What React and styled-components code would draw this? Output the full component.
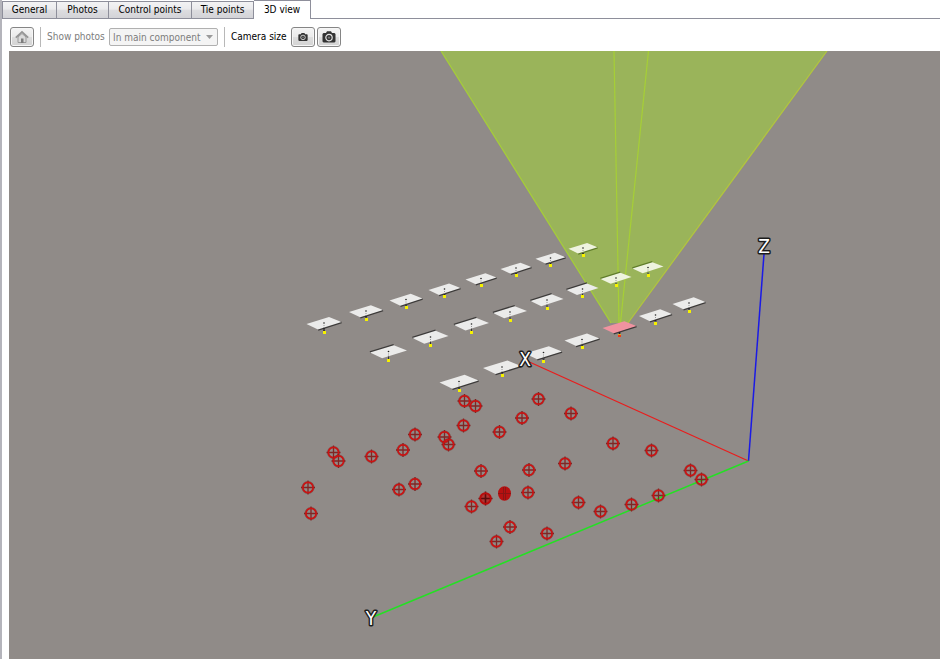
import { useState } from "react";
import styled, { createGlobalStyle, css } from "styled-components";

const GlobalStyle = createGlobalStyle`
  * {
    box-sizing: border-box;
  }

  body {
    margin: 0;
    background-color: #ffffff;
    font-family: "DejaVu Sans Condensed", "DejaVu Sans", Tahoma, sans-serif;
    font-size: 10px;
    color: #000000;
    overflow-x: hidden;
  }
`;

const Page = styled.div`
  display: flex;
  flex-direction: column;
  min-height: 100vh;
  border-left: 2px solid #b4b4bb;
`;

const TabBar = styled.div`
  display: flex;
  align-items: flex-end;
  height: 19px;
  border-bottom: 1px solid #8e8f9b;
`;

const Tab = styled.button`
  height: 17px;
  width: ${({ $width }) => $width}px;
  padding: 0;
  font: inherit;
  line-height: 16px;
  white-space: nowrap;
  color: #000000;
  background: linear-gradient(#f3f3f4 0%, #ebebed 45%, #dddde0 50%, #d3d3d7 100%);
  border: 1px solid #8e8f9b;
  border-left-width: ${({ $first }) => ($first ? 1 : 0)}px;
  border-bottom: 0;

  ${({ $active }) =>
    $active &&
    css`
      height: 19px;
      margin-bottom: -1px;
      background: #ffffff;
    `}
`;

const Toolbar = styled.div`
  display: flex;
  align-items: center;
  height: 32px;
  padding: 4px 8px 0;
`;

const ToolButton = styled.button`
  display: flex;
  align-items: center;
  justify-content: center;
  width: 24px;
  height: 20px;
  padding: 0;
  background: linear-gradient(#f4f4f4 0%, #ebebeb 48%, #dddddd 52%, #d3d3d3 100%);
  border: 1px solid #858585;
  border-radius: 3px;
  box-shadow: inset 0 0 0 1px #f6f6f6;
`;

const Divider = styled.span`
  width: 1px;
  height: 20px;
  margin: 0 6px;
  background-color: #b8b8b8;
`;

const Label = styled.label`
  width: ${({ $width }) => $width}px;
  white-space: nowrap;
  line-height: 16px;
  color: ${({ $muted }) => ($muted ? "#7c7c7c" : "#000000")};
`;

const SelectBox = styled.div`
  position: relative;
  display: flex;
  width: 109px;

  svg {
    position: absolute;
    right: 5px;
    top: 7px;
    pointer-events: none;
  }
`;

const Select = styled.select`
  width: 100%;
  height: 18px;
  padding: 0 0 0 3px;
  font: inherit;
  color: #7c7c7c;
  opacity: 1;
  appearance: none;
  background-color: #f4f4f4;
  border: 1px solid #b0b0b0;
  border-radius: 2px;
`;

const Group = styled.div`
  display: flex;
  align-items: center;
  gap: 2px;
`;

const Viewport = styled.main`
  flex: 1;
  margin-left: 7px;
  background-color: #908b88;

  svg {
    display: block;
    width: 100%;
    height: auto;
  }
`;

const AxisName = styled.text`
  font-family: "DejaVu Sans Condensed", "DejaVu Sans", sans-serif;
  font-size: 19px;
  text-anchor: middle;
  fill: #ffffff;
  stroke: #1c1c1c;
  stroke-width: 3px;
  stroke-linejoin: round;
  paint-order: stroke;
`;

const TABS = [
  { name: "General", width: 55 },
  { name: "Photos", width: 52 },
  { name: "Control points", width: 83 },
  { name: "Tie points", width: 62 },
  { name: "3D view", width: 57 },
];

// x, y of the plate centre, half width, y of the yellow foot, kind, far edge shaded
const CAMERAS = [
  [583, 248, 14.5, 255, "lit"],
  [550.5, 258, 15, 265],
  [516, 268, 15.5, 275],
  [481, 278.5, 15.5, 285],
  [444.5, 289, 16, 296],
  [406, 299.5, 16.5, 307],
  [366, 311, 17, 319],
  [324, 323, 17.5, 332],
  [648, 267.5, 15.5, 275, "lit", true],
  [616, 278, 15.5, 285, "lit", true],
  [582.5, 289, 16, 296, "", true],
  [547, 300, 16.5, 308, "", true],
  [510, 312, 17, 320, "", true],
  [471.5, 324, 17.5, 332, "", true],
  [430.5, 337, 18, 345, "", true],
  [388.5, 351.5, 18.5, 360, "", true],
  [689, 303, 16.5, 311],
  [655.5, 315, 16.5, 323],
  [619.5, 327, 17, 335, "selected"],
  [582, 339.5, 17.5, 347],
  [543.5, 352.5, 18.5, 361],
  [502, 367, 19, 375],
  [459, 381.5, 19.5, 390],
];

const PLATE_FILL = { lit: "#eef3df", selected: "#f093a0" };

const POINTS = [
  [464.5, 401], [475.5, 406], [463.5, 425.5], [444.5, 437], [448.5, 444.5],
  [415, 434.5], [403, 450], [371.5, 456.5], [333.5, 452.5], [338.5, 461],
  [308, 487.5], [311, 513.5], [399, 489.5], [415, 484], [481, 471],
  [471.5, 506.5], [528, 492.5], [529, 470], [510, 527], [496.5, 541.5],
  [547, 533.5], [578.5, 502.5], [600.5, 511.5], [631.5, 504.5], [658.5, 495.5],
  [701.5, 479.5], [690.5, 470.5], [651.5, 450.5], [613, 443.5], [565, 463.5],
  [571, 413.5], [538.5, 399], [522, 418], [499.5, 432],
];

const Camera = ({ x, y, half, foot, kind, flip }) => {
  const k = half / 17.5;
  const left = [x - half, y + k];
  const top = [x + 5 * k, y - 6 * k];
  const right = [x + half, y - k];
  const bottom = [x - 6 * k, y + 6.5 * k];
  const edge = flip ? [left, top] : [bottom, right];
  const dy = flip ? -0.3 : 0.3;

  return (
    <g>
      <line
        x1={edge[0][0]}
        y1={edge[0][1] + dy}
        x2={edge[1][0]}
        y2={edge[1][1] + dy}
        stroke={kind === "lit" ? "#5f7c2a" : "#3d3b3a"}
        strokeWidth="2"
      />
      {!flip && <line x1={x} y1={y + 5} x2={x} y2={foot} stroke="#222222" strokeWidth="1.6" />}
      <polygon points={[left, top, right, bottom].join(" ")} fill={PLATE_FILL[kind] || "#ebebea"} />
      {kind !== "selected" && (
        <>
          <circle cx={x} cy={y} r="0.8" fill="#222222" />
          <line x1={x} y1={y + 2} x2={x} y2={foot} stroke="#777777" strokeWidth="0.7" strokeDasharray="1 1" />
        </>
      )}
      {flip && <line x1={x} y1={y + 5} x2={x} y2={foot} stroke="#333333" />}
      <rect
        x={Math.floor(x) - 1}
        y={foot - 1}
        width="3"
        height="3"
        fill={kind === "selected" ? "#e0b020" : "#f6f200"}
      />
      {kind === "selected" && <rect x={Math.floor(x) - 1} y={foot} width="3" height="2" fill="#f03a18" />}
    </g>
  );
};

const Target = ({ x, y }) => (
  <g fill="none">
    <path d={`M${x - 7} ${y}h14M${x} ${y - 7}v14`} stroke="#802624" strokeWidth="1.3" />
    <circle cx={x} cy={y} r="5.5" stroke="#6e2523" strokeWidth="2" opacity="0.5" />
    <circle cx={x} cy={y} r="5.1" stroke="#cc1212" strokeWidth="1.6" />
  </g>
);

const HomeIcon = () => (
  <svg width="14" height="14" viewBox="0 0 14 14" aria-hidden="true">
    <path d="M3 7v5.500h8V7L7 3.500z" fill="#dadada" stroke="#9a9a9a" />
    <path d="M.8 7.600 7 1.900l6.200 5.700" fill="none" stroke="#969696" strokeWidth="1.800" />
    <path d="M6 8.500h2.500V13H6z" fill="#7d7d7d" />
  </svg>
);

const CameraIcon = ({ size }) => (
  <svg width={size} height={size} viewBox="0 0 14 14" aria-hidden="true">
    <path d="M1.500 3H4l1-1.700h4L10 3h2.500L13.500 4v7.500l-1 1h-11l-1-1V4z" fill="#333333" />
    <circle cx="7" cy="7.600" r="3.200" fill="#333333" stroke="#e2e2e2" strokeWidth="1.200" />
    <circle cx="7" cy="7.600" r="1.200" fill="#777777" />
  </svg>
);

const Scene = () => (
  <svg viewBox="9 51 931 608" role="img" aria-label="3D view">
    <polygon points="441,51 827,51 628,323 611,323" fill="#9ab45a" />
    <g stroke="#a6cf36" strokeWidth="1.2" fill="none">
      <path d="M441 51 611 323" />
      <path d="M614 51 619 323" />
      <path d="M648.500 51 620.500 323" />
      <path d="M827 51 628 323" stroke="#b3c63c" />
    </g>

    {CAMERAS.map(([x, y, half, foot, kind, flip]) => (
      <Camera key={`${x}-${y}`} x={x} y={y} half={half} foot={foot} kind={kind} flip={flip} />
    ))}

    <path d="M748.500 461 525 360" stroke="#ea1c1c" strokeWidth="1.2" />
    <path d="M748.500 461 764 254" stroke="#1a1ae6" strokeWidth="1.500" />
    <path d="M748.500 461 373 617" stroke="#24e024" strokeWidth="1.500" />

    {POINTS.map(([x, y]) => (
      <Target key={`${x}-${y}`} x={x} y={y} />
    ))}
    <circle cx="485.500" cy="498.500" r="5" fill="#b03532" />
    <path d="M478.500 498.500h14M485.500 491.500v14" stroke="#5c0c0c" strokeWidth="1.600" />
    <circle cx="485.500" cy="498.500" r="5.300" fill="none" stroke="#b80c0c" strokeWidth="2" />
    <ellipse cx="504.500" cy="493.500" rx="6.500" ry="7.300" fill="#b81010" />
    <path d="M498 493.500h13M503.500 487v13M505.500 487v13" stroke="#8c1414" />

    <AxisName x="525" y="366">X</AxisName>
    <AxisName x="371" y="625">Y</AxisName>
    <AxisName x="764" y="253">Z</AxisName>
  </svg>
);

const App = () => {
  const [active, setActive] = useState("3D view");

  return (
    <>
      <GlobalStyle />
      <Page>
        <TabBar role="tablist">
          {TABS.map(({ name, width }, i) => (
            <Tab
              key={name}
              role="tab"
              aria-selected={active === name}
              $active={active === name}
              $first={i === 0}
              $width={width}
              onClick={() => setActive(name)}
            >
              {name}
            </Tab>
          ))}
        </TabBar>
        <Toolbar>
          <ToolButton aria-label="Home" disabled>
            <HomeIcon />
          </ToolButton>
          <Divider />
          <Label htmlFor="photos" $muted $width={62}>
            Show photos
          </Label>
          <SelectBox>
            <Select id="photos" disabled>
              <option>In main component</option>
            </Select>
            <svg width="7" height="4" aria-hidden="true">
              <path d="M0 0h7L3.500 4z" fill="#9a9a9a" />
            </svg>
          </SelectBox>
          <Divider />
          <Label as="span" id="camera-size" $width={60}>
            Camera size
          </Label>
          <Group role="group" aria-labelledby="camera-size">
            <ToolButton aria-label="Smaller cameras">
              <CameraIcon size={10} />
            </ToolButton>
            <ToolButton aria-label="Larger cameras">
              <CameraIcon size={14} />
            </ToolButton>
          </Group>
        </Toolbar>
        <Viewport>
          <Scene />
        </Viewport>
      </Page>
    </>
  );
};

export default App;
